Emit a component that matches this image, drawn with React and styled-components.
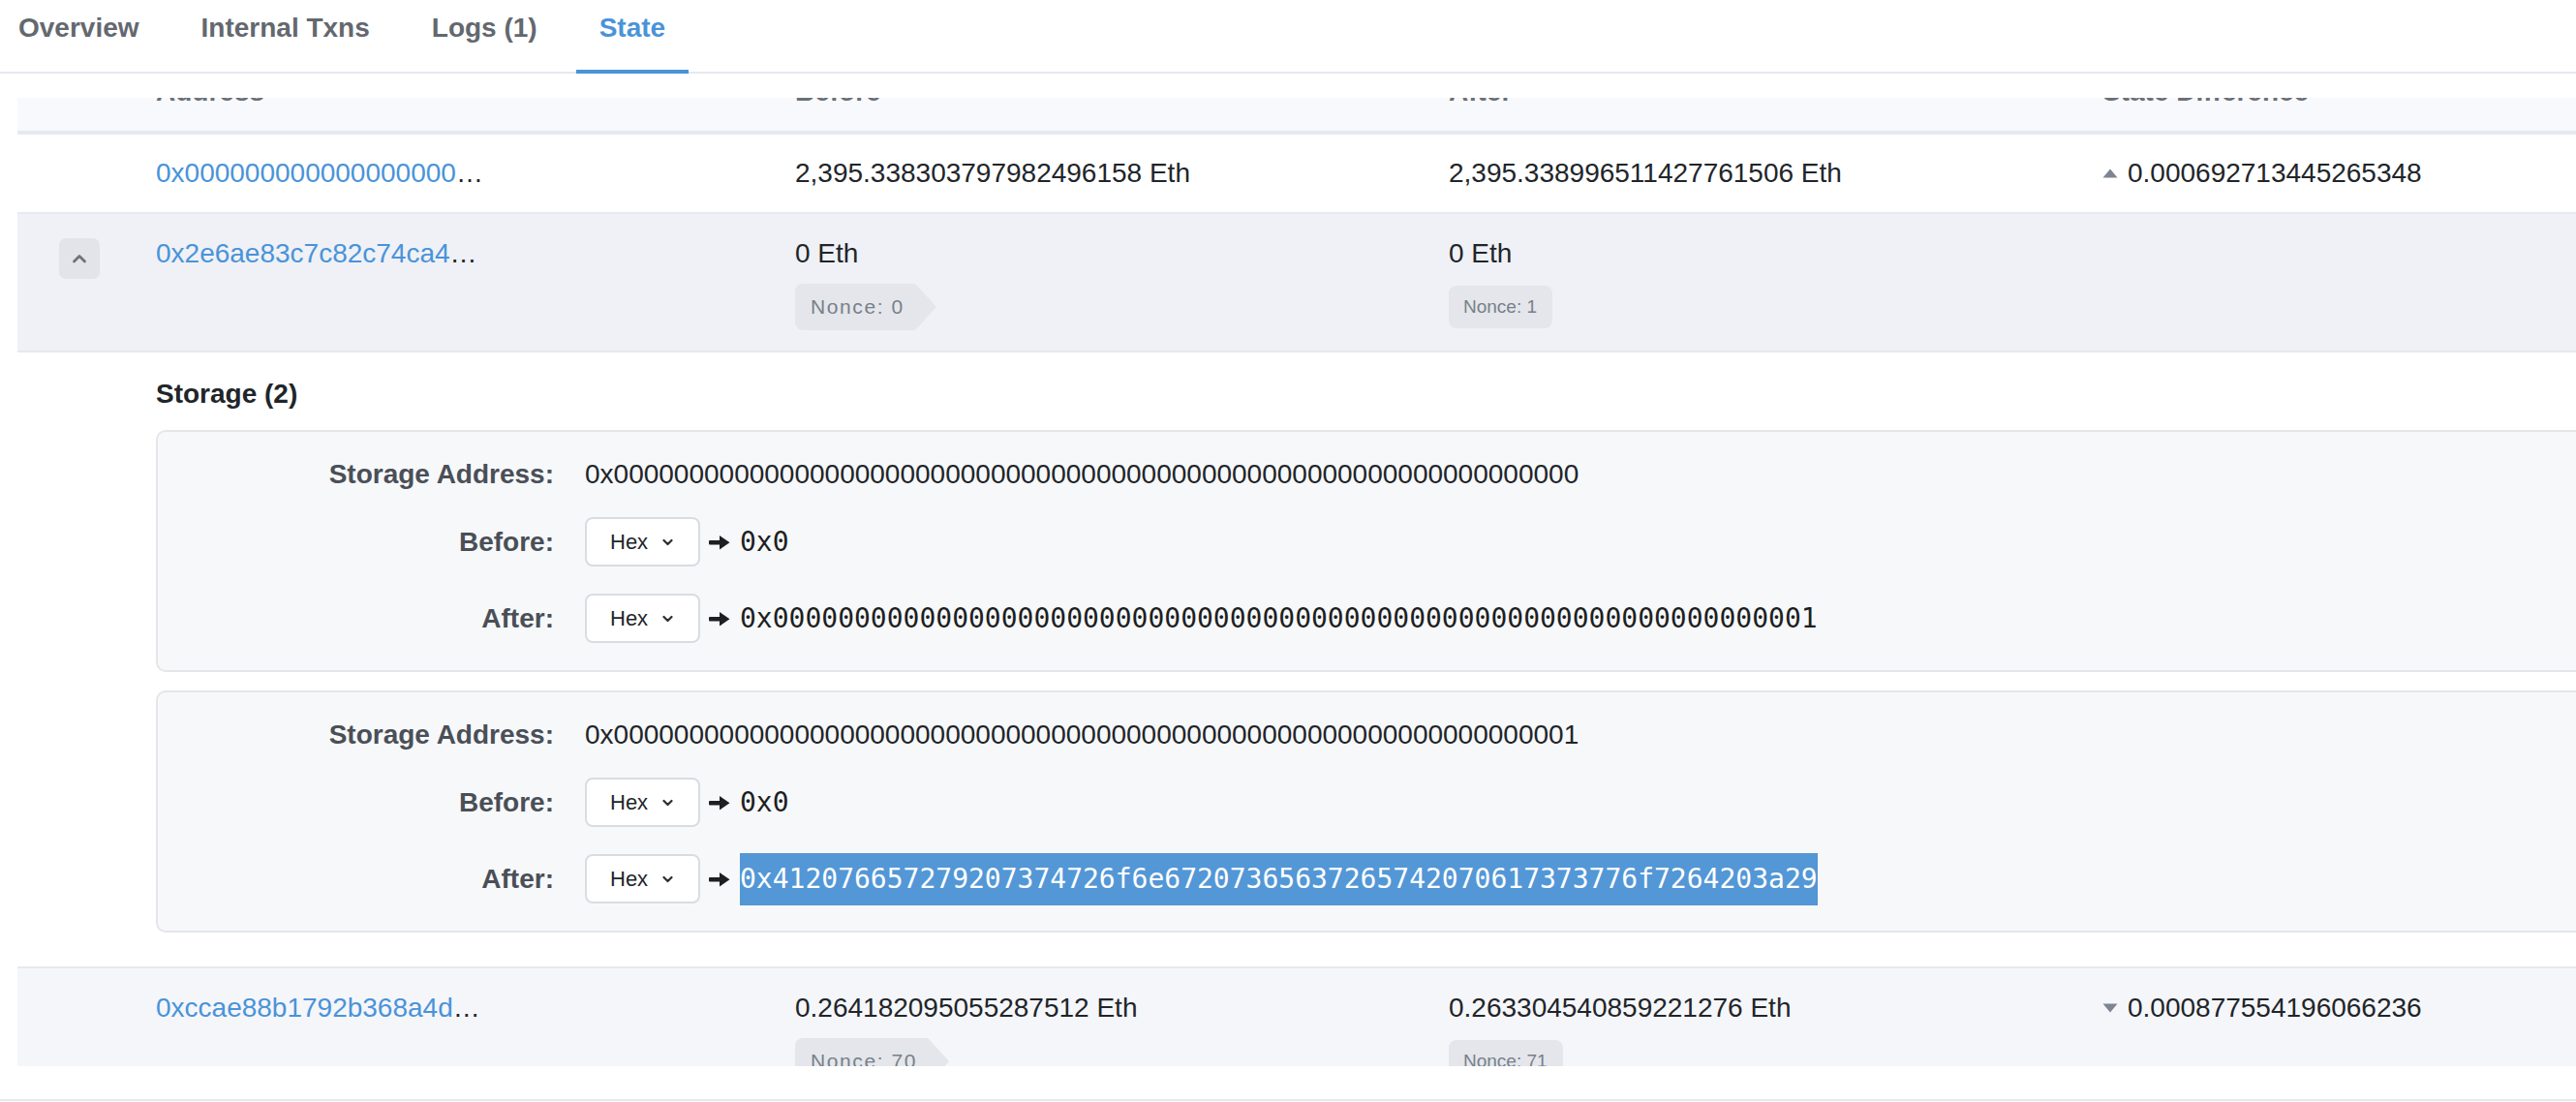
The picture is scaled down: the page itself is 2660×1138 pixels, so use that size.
import React from 'react';
import styled, { createGlobalStyle } from 'styled-components';

const GlobalStyle = createGlobalStyle`
  html, body { margin: 0; padding: 0; background: #fff; }
  body {
    font-family: "Liberation Sans", Arial, Helvetica, sans-serif;
    color: #212529;
    overflow: hidden;
  }
`

const cols = '127px 660px 675px 675px 1fr';

const Page = styled.div`
  width: 2660px;
  height: 1138px;
  overflow: hidden;
  background: #fff;
`
const TabBar = styled.nav`
  display: flex;
  height: 76px;
  box-sizing: border-box;
  border-bottom: 2px solid #e6e8ee;
`
const Tab = styled.div`
  position: relative;
  padding: 13px 24px 0;
  margin-right: 16px;
  font-size: 28px;
  font-weight: 700;
  line-height: 32px;
  color: ${p => (p.$active ? '#4a93d9' : '#63686f')};
  &:first-child { padding-left: 19px; }
  &::after {
    content: '';
    display: ${p => (p.$active ? 'block' : 'none')};
    position: absolute;
    left: 0;
    right: 0;
    bottom: -2px;
    height: 4px;
    background: #4a93d9;
  }
`
const Card = styled.section`
  padding: 25px 0 34px 18px;
  border-bottom: 2px solid #e6e8ee;
`
// the table is scrolled: the header sits partly above the visible area
const Viewport = styled.div`
  height: 1000px;
  overflow: hidden;
`
const Table = styled.div`
  width: 2900px;
  margin-top: -46px;
  font-size: 28px;
  line-height: 32px;
`
const HeadRow = styled.div`
  display: grid;
  grid-template-columns: ${cols};
  align-items: center;
  height: 80px;
  background: #f8f9fc;
  border-bottom: 4px solid #e7e8f0;
  font-weight: 700;
  color: #6a6f76;
`
const Row = styled.div`
  display: grid;
  grid-template-columns: ${cols};
  align-items: start;
  padding: ${p => (p.$tall ? '25px 0 21px' : '24px 0')};
  background: ${p => p.$bg || '#fff'};
  border-bottom: 2px solid #e8e9ef;
`
const Cell = styled.div`
  padding: 0 16px;
  min-width: 0;
`
const ToggleCell = styled.div`
  display: flex;
  justify-content: center;
`
const ToggleButton = styled.button`
  display: flex;
  align-items: center;
  justify-content: center;
  width: 42px;
  height: 42px;
  padding: 0;
  border: none;
  border-radius: 7px;
  background: #e2e4ea;
`
const AddressLink = styled.a`
  color: #4a93d9;
  text-decoration: none;
`
const ValueCell = styled(Cell)`
  display: flex;
  flex-direction: column;
  align-items: flex-start;
  gap: 15px;
`
const NonceFrom = styled.span`
  position: relative;
  display: inline-flex;
  align-items: center;
  height: 48px;
  padding: 0 11px 0 16px;
  background: #e4e6eb;
  border-radius: 8px 0 0 8px;
  font-size: 21px;
  letter-spacing: 1.6px;
  color: #77808a;
  &::after {
    content: '';
    position: absolute;
    left: 100%;
    top: 0;
    border-left: 22px solid #e4e6eb;
    border-top: 24px solid transparent;
    border-bottom: 24px solid transparent;
  }
`
const NonceTo = styled.span`
  display: inline-flex;
  align-items: center;
  height: 44px;
  margin-top: 2px;
  padding: 0 16px 0 15px;
  background: #e4e6eb;
  border-radius: 8px;
  font-size: 19px;
  color: #77808a;
`
const DiffCell = styled(Cell)`
  display: flex;
  align-items: center;
  gap: 10px;
`
const StorageSection = styled.div`
  padding: 27px 0 35px 143px;
  border-bottom: 2px solid #e8e9ef;
  background: #fff;
`
const StorageTitle = styled.div`
  font-weight: 700;
  margin-bottom: 21px;
`
const SlotBox = styled.div`
  display: grid;
  grid-template-columns: 409px 1fr;
  column-gap: 32px;
  row-gap: 28px;
  align-items: center;
  padding: 28px 0;
  background: #f7f8fa;
  border: 2px solid #e4e6ea;
  border-radius: 10px;
  & + & { margin-top: 19px; }
`
const SlotLabel = styled.div`
  text-align: right;
  font-weight: 700;
  color: #4a4f57;
`
const SlotValue = styled.div`
  display: flex;
  align-items: center;
  height: 51px;
`
const FormatSelect = styled.div`
  display: inline-flex;
  align-items: center;
  gap: 15px;
  box-sizing: border-box;
  width: 119px;
  height: 51px;
  padding: 0 24px;
  border: 2px solid #d9dce2;
  border-radius: 8px;
  background: #fff;
  font-size: 22px;
  color: #212529;
`
const ArrowIcon = styled.svg`
  margin: 0 10px 0 9px;
  flex: none;
`
const HexValue = styled.span`
  display: inline-block;
  font-family: "DejaVu Sans Mono", "Liberation Mono", monospace;
  font-size: 28px;
  line-height: 54px;
  color: ${p => (p.$selected ? '#fff' : '#1d1f22')};
  background: ${p => (p.$selected ? '#5397d6' : 'transparent')};
`

const ChevronUp = () => (
  <svg width="16" height="12" viewBox="0 0 16 12">
    <polyline points="2.5,9 8,3.5 13.5,9" fill="none" stroke="#6d737a" strokeWidth="2.8" strokeLinecap="round" strokeLinejoin="round" />
  </svg>
);

const ChevronDown = () => (
  <svg width="11" height="8" viewBox="0 0 11 8">
    <polyline points="1.5,2 5.5,6 9.5,2" fill="none" stroke="#2a2d31" strokeWidth="2.2" strokeLinecap="round" strokeLinejoin="round" />
  </svg>
);

const Arrow = () => (
  <ArrowIcon width="22" height="16" viewBox="0 0 22 16">
    <rect x="0" y="6" width="13" height="4.4" rx="1" fill="#1d1f22" />
    <polygon points="11,1 21.5,8.2 11,15.4" fill="#1d1f22" />
  </ArrowIcon>
);

const Triangle = ({ up }) => (
  <svg width="16" height="10" viewBox="0 0 16 10">
    <polygon points={up ? '8,0.5 15.5,9.5 0.5,9.5' : '0.5,0.5 15.5,0.5 8,9.5'} fill="#7c8591" />
  </svg>
);

const Slot = ({ address, before, after, selected }) => (
  <SlotBox>
    <SlotLabel>Storage Address:</SlotLabel>
    <div>{address}</div>
    <SlotLabel>Before:</SlotLabel>
    <SlotValue>
      <FormatSelect>Hex <ChevronDown /></FormatSelect>
      <Arrow />
      <HexValue>{before}</HexValue>
    </SlotValue>
    <SlotLabel>After:</SlotLabel>
    <SlotValue>
      <FormatSelect>Hex <ChevronDown /></FormatSelect>
      <Arrow />
      <HexValue $selected={selected}>{after}</HexValue>
    </SlotValue>
  </SlotBox>
);

const zeros = n => '0'.repeat(n);

const App = () => {
  return (
    <Page>
      <GlobalStyle />
      <TabBar>
        <Tab>Overview</Tab>
        <Tab>Internal Txns</Tab>
        <Tab>Logs (1)</Tab>
        <Tab $active>State</Tab>
      </TabBar>
      <Card>
        <Viewport>
          <Table>
            <HeadRow>
              <Cell />
              <Cell>Address</Cell>
              <Cell>Before</Cell>
              <Cell>After</Cell>
              <Cell>State Difference</Cell>
            </HeadRow>

            <Row>
              <Cell />
              <Cell><AddressLink href="#">0x{zeros(18)}</AddressLink>…</Cell>
              <Cell>2,395.338303797982496158 Eth</Cell>
              <Cell>2,395.338996511427761506 Eth</Cell>
              <DiffCell><Triangle up />0.000692713445265348</DiffCell>
            </Row>

            <Row $bg="#eff1f6" $tall>
              <ToggleCell><ToggleButton><ChevronUp /></ToggleButton></ToggleCell>
              <Cell><AddressLink href="#">0x2e6ae83c7c82c74ca4</AddressLink>…</Cell>
              <ValueCell>0 Eth<NonceFrom>Nonce: 0</NonceFrom></ValueCell>
              <ValueCell>0 Eth<NonceTo>Nonce: 1</NonceTo></ValueCell>
              <Cell />
            </Row>

            <StorageSection>
              <StorageTitle>Storage (2)</StorageTitle>
              <Slot
                address={'0x' + zeros(64)}
                before="0x0"
                after={'0x' + zeros(63) + '1'}
              />
              <Slot
                address={'0x' + zeros(63) + '1'}
                before="0x0"
                after="0x412076657279207374726f6e67207365637265742070617373776f7264203a29"
                selected
              />
            </StorageSection>

            <Row $bg="#f5f6f9" $tall>
              <Cell />
              <Cell><AddressLink href="#">0xccae88b1792b368a4d</AddressLink>…</Cell>
              <ValueCell>0.264182095055287512 Eth<NonceFrom>Nonce: 70</NonceFrom></ValueCell>
              <ValueCell>0.263304540859221276 Eth<NonceTo>Nonce: 71</NonceTo></ValueCell>
              <DiffCell><Triangle />0.000877554196066236</DiffCell>
            </Row>
          </Table>
        </Viewport>
      </Card>
    </Page>
  );
}

export default App;
